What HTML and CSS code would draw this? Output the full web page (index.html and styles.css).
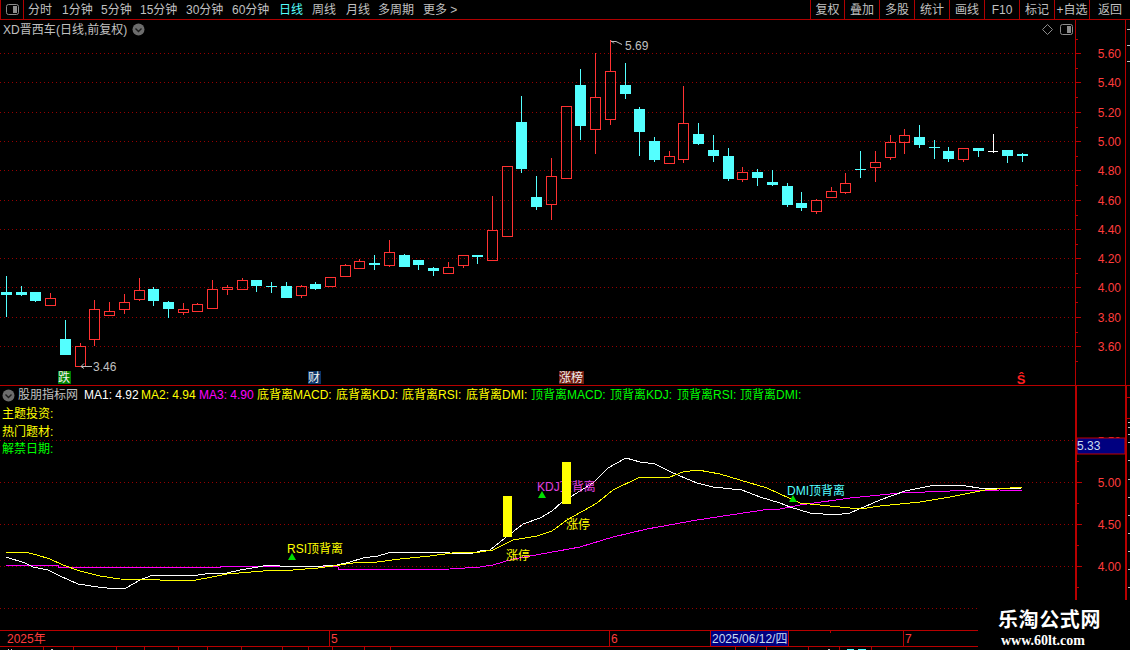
FILE: index.html
```html
<!DOCTYPE html>
<html lang="zh-CN">
<head>
<meta charset="utf-8">
<title>XD晋西车</title>
<link rel="stylesheet" href="styles.css">
</head>
<body>
<div class="app">
  <header class="toolbar">
    <button class="panel-btn" aria-label="panel"><svg class="glyph" width="13" height="11" viewBox="0 0 13 11"><rect x="0.5" y="0.5" width="12" height="10" rx="2" class="box"/><rect x="7" y="2" width="4" height="7" class="box-fill"/></svg></button>
    <nav class="periods">
      <span>分时</span><span>1分钟</span><span>5分钟</span><span>15分钟</span><span>30分钟</span><span>60分钟</span><span class="active">日线</span><span>周线</span><span>月线</span><span>多周期</span><span>更多 &gt;</span>
    </nav>
    <nav class="actions">
      <span>复权</span><span>叠加</span><span>多股</span><span>统计</span><span>画线</span><span>F10</span><span>标记</span><span>+自选</span><span>返回</span>
    </nav>
  </header>

  <section class="pane kline">
    <div class="pane-title">
      <span>XD晋西车 (日线,前复权)</span>
      <svg class="glyph" width="13" height="13" viewBox="0 0 13 13"><circle cx="6.5" cy="6.5" r="6" class="disc"/><path d="M3.5 5.5l3 3 3-3" class="chev"/></svg>
    </div>
    <svg class="chart" width="1130" height="366" viewBox="0 20 1130 366">
      <path class="grid" d="M0 53.5H1075M0 82.5H1075M0 112.5H1075M0 141.5H1075M0 170.5H1075M0 200.5H1075M0 229.5H1075M0 258.5H1075M0 287.5H1075M0 317.5H1075M0 346.5H1075"/>
      <path class="axis" d="M1075.5 20V386M1125.5 20V386M0 385.5H1130"/>
      <path class="axis" d="M1075 53.5h6M1075 82.5h6M1075 112.5h6M1075 141.5h6M1075 170.5h6M1075 200.5h6M1075 229.5h6M1075 258.5h6M1075 287.5h6M1075 317.5h6M1075 346.5h6M1075 68.5h3M1075 97.5h3M1075 127.5h3M1075 156.5h3M1075 185.5h3M1075 215.5h3M1075 244.5h3M1075 273.5h3M1075 302.5h3M1075 332.5h3M1075 361.5h3M1075 39.5h3"/>
      <path class="stub" d="M1127 29.5h3M1127 45.5h3M1127 61.5h3"/>
      <g class="price">
        <text x="1121" y="58">5.60</text><text x="1121" y="87">5.40</text><text x="1121" y="117">5.20</text><text x="1121" y="146">5.00</text><text x="1121" y="175">4.80</text><text x="1121" y="205">4.60</text><text x="1121" y="234">4.40</text><text x="1121" y="263">4.20</text><text x="1121" y="292">4.00</text><text x="1121" y="322">3.80</text><text x="1121" y="351">3.60</text>
      </g>
      <path class="c-red" d="M50.5 293V298M45.5 298.5h10v7h-10zM80.5 343V346M75.5 346.5h10v20h-10zM94.5 300V309M94.5 340V346M89.5 309.5h10v30h-10zM109.5 302V311M104.5 311.5h10v4h-10zM124.5 294V302M124.5 310V314M119.5 302.5h10v7h-10zM139.5 278V290M139.5 300V301M134.5 290.5h10v9h-10zM183.5 303V309M183.5 313V315M178.5 309.5h10v3h-10zM197.5 303V304M192.5 304.5h10v7h-10zM212.5 280V289M207.5 289.5h10v19h-10zM227.5 285V287M227.5 290V295M222.5 287.5h10v2h-10zM242.5 278V280M237.5 280.5h10v9h-10zM301.5 285V286M301.5 296V298M296.5 286.5h10v9h-10zM325.5 277.5h10v9h-10zM345.5 264V265M340.5 265.5h10v11h-10zM359.5 259V261M354.5 261.5h10v7h-10zM389.5 240V252M389.5 266V267M384.5 252.5h10v13h-10zM448.5 262V267M443.5 267.5h10v6h-10zM463.5 266V268M458.5 255.5h10v10h-10zM492.5 196V230M487.5 230.5h10v30h-10zM502.5 166.5h10v70h-10zM551.5 158V176M551.5 205V220M546.5 176.5h10v28h-10zM561.5 106.5h10v72h-10zM595.5 53V97M595.5 130V154M590.5 97.5h10v32h-10zM610.5 40V71M610.5 120V125M605.5 71.5h10v48h-10zM669.5 151V156M664.5 156.5h10v7h-10zM683.5 86V123M683.5 160V163M678.5 123.5h10v36h-10zM742.5 167V172M742.5 180V182M737.5 172.5h10v7h-10zM816.5 199V200M816.5 212V214M811.5 200.5h10v11h-10zM831.5 187V191M826.5 191.5h10v6h-10zM845.5 173V183M845.5 193V194M840.5 183.5h10v9h-10zM875.5 151V162M875.5 168V182M870.5 162.5h10v5h-10zM890.5 135V142M890.5 158V160M885.5 142.5h10v15h-10zM904.5 129V135M904.5 143V154M899.5 135.5h10v7h-10zM963.5 160V162M958.5 148.5h10v11h-10z"/>
      <path class="c-cyan-w" d="M6.5 276V317M21.5 286V296M35.5 301V302M65.5 320V339M153.5 287V306M168.5 301V318M256.5 286V292M271.5 282V293M286.5 282V286M315.5 282V290M374.5 255V270M404.5 254V255M418.5 265V270M433.5 267V276M477.5 257V264M521.5 96V173M536.5 176V210M580.5 69V140M625.5 63V99M639.5 107V156M654.5 137V162M698.5 123V145M713.5 135V162M728.5 148V181M757.5 169V186M772.5 170V186M787.5 183V207M801.5 192V211M860.5 151V178M919.5 125V148M934.5 140V159M948.5 147V162M978.5 151V157M1007.5 156V163M1022.5 153V162"/>
      <path class="c-cyan" d="M1 292h11v3h-11zM16 292h11v3h-11zM30 292h11v9h-11zM60 339h11v16h-11zM148 289h11v12h-11zM163 302h11v7h-11zM251 280h11v6h-11zM266 286h11v1h-11zM281 286h11v12h-11zM310 284h11v5h-11zM369 263h11v2h-11zM399 255h11v12h-11zM413 260h11v5h-11zM428 268h11v3h-11zM472 255h11v2h-11zM516 122h11v47h-11zM531 197h11v10h-11zM575 85h11v41h-11zM620 85h11v9h-11zM634 109h11v23h-11zM649 141h11v19h-11zM693 134h11v10h-11zM708 150h11v6h-11zM723 156h11v23h-11zM752 172h11v6h-11zM767 182h11v3h-11zM782 186h11v19h-11zM796 203h11v5h-11zM855 169h11v1h-11zM914 137h11v8h-11zM929 147h11v1h-11zM943 151h11v8h-11zM973 148h11v3h-11zM1002 150h11v6h-11zM1017 154h11v2h-11z"/>
      <path class="c-white" d="M993.5 134V153M988 151.5h10"/>
      <path class="marker" d="M92 366.5H81M84 363.5l-3 3 3 2M622 44.5l-6-3H611M611 40.5l3 3"/>
      <text class="note" x="93" y="371">3.46</text>
      <text class="note" x="625" y="50">5.69</text>
      <rect x="58" y="371" width="13" height="13" class="tag-green"/>
      <text class="tag" x="58" y="382">跌</text>
      <rect x="308" y="371" width="13" height="13" class="tag-blue"/>
      <text class="tag" x="308" y="382">财</text>
      <rect x="559" y="371" width="25" height="13" class="tag-maroon"/>
      <text class="tag" x="559" y="382">涨榜</text>
      <text class="sig" x="1021" y="384">Ŝ</text>
      <path class="diamond" d="M1047.5 24.5l5 5-5 5-5-5z"/>
      <rect x="1060.5" y="24.5" width="12" height="10" rx="2" class="box"/><rect x="1067" y="26" width="4" height="7" class="box-fill"/>
    </svg>
  </section>

  <section class="pane indicator">
    <div class="ind-legend">
      <svg class="glyph" width="13" height="13" viewBox="0 0 13 13"><circle cx="6.5" cy="6.5" r="6" class="disc"/><path d="M3.5 5.5l3 3 3-3" class="chev"/></svg>
      <span class="gray">股朋指标网</span>
      <span class="white">MA1: 4.92</span>
      <span class="yellow">MA2: 4.94</span>
      <span class="magenta">MA3: 4.90</span>
      <span class="yellow">底背离MACD:</span>
      <span class="yellow">底背离KDJ:</span>
      <span class="yellow">底背离RSI:</span>
      <span class="yellow">底背离DMI:</span>
      <span class="green">顶背离MACD:</span>
      <span class="green">顶背离KDJ:</span>
      <span class="green">顶背离RSI:</span>
      <span class="green">顶背离DMI:</span>
    </div>
    <ul class="ind-notes">
      <li class="yellow">主题投资:</li>
      <li class="yellow">热门题材:</li>
      <li class="green">解禁日期:</li>
    </ul>
    <svg class="chart" width="1130" height="244" viewBox="0 386 1130 244">
      <path class="grid" d="M0 440.5H1075M0 482.5H1075M0 524.5H1075M0 566.5H1075M0 608.5H1075"/>
      <path class="axis-thick" d="M1076 386V630M1126 386V630"/>
      <path class="axis" d="M1075 482.5h7M1075 524.5h7M1075 566.5h7M1075 461.5h4M1075 503.5h4M1075 545.5h4M1075 587.5h4M1075 608.5h7M1127 397.5h3M1127 418.5h3"/>
      <path class="stub" d="M1128 422.5h2M1128 427.5h2M1128 434.5h2M1128 442.5h2M1128 460.5h2M1128 479.5h2M1128 497.5h2M1128 515.5h2M1128 533.5h2M1128 551.5h2M1128 569.5h2M1128 587.5h2"/>
      <g class="price">
        <text x="1121" y="446">5.50</text><text x="1121" y="487">5.00</text><text x="1121" y="529">4.50</text><text x="1121" y="571">4.00</text>
      </g>
      <rect x="1077" y="438" width="48" height="16" class="cursor-box"/>
      <text class="cursor-text" x="1077" y="450">5.33</text>
      <polyline class="ma3" points="6,565 58,565 58,567 220,567 220,566 307,566 338,567 338,569 397,569 400,570 450,569 480,567 493,565 513,559 547,553 580,547 613,537 647,529 697,520 730,515 770,509 780,509 800,505 850,498 900,493 950,491 1000,490 1022,491"/>
      <polyline class="ma1" points="6,557 25,563 33,567 48,570 60,576 78,584 98,587 107,588 126,588 140,580 153,575 175,575 192,576 205,574 227,573 240,570 258,567 268,565 280,566 323,566 337,565 350,562 363,558 378,556 388,553 400,552 430,552 470,554 480,551 490,550 505,538 523,524 540,518 552,511 562,502 580,491 593,483 608,468 626,458 640,462 655,464 673,473 697,483 713,487 742,490 760,497 780,503 790,507 810,513 835,515 850,513 880,500 905,491 935,485 960,485 985,489 1022,488"/>
      <polyline class="ma2" points="6,552 25,552 37,555 50,559 63,565 80,571 100,576 120,579 160,580 190,581 207,578 227,574 263,571 293,570 318,568 333,566 353,563 377,562 400,559 430,556 460,552 480,552 493,550 513,540 537,536 552,531 567,520 597,503 613,490 638,478 670,477 683,472 698,470 720,474 740,480 767,488 780,494 800,503 830,506 860,509 880,506 920,502 950,497 985,490 1022,487"/>
      <text class="lbl lbl-magenta" x="537" y="491">KDJ顶背离</text>
      <rect x="503" y="496" width="9" height="41" class="limit-bar"/>
      <rect x="562" y="462" width="9" height="42" class="limit-bar"/>
      <text class="lbl lbl-yellow" x="287" y="553">RSI顶背离</text>
      <text class="lbl lbl-yellow" x="506" y="560">涨停</text>
      <text class="lbl lbl-yellow" x="566" y="529">涨停</text>
      <text class="lbl lbl-cyan" x="787" y="495">DMI顶背离</text>
      <path class="tri" d="M292 553l4 7h-8zM542 491l4 7h-8zM793 495l4 7h-8z"/>
    </svg>
  </section>

  <footer class="time-axis">
    <svg class="chart" width="1130" height="20" viewBox="0 630 1130 20">
      <path class="axis" d="M0 630.5H1130M0 646.5H1130M329.5 630V646M609.5 630V646M903.5 630V646M830.5 631V633"/>
      <path class="axis" d="M43.5 647V650M73.5 647V650M116.5 647V650M144.5 647V650M178.5 647V650M207.5 647V650M241.5 647V650M282.5 647V650M308.5 647V650M332.5 647V650M364.5 647V650M390.5 647V650M735.5 647V650M766.5 647V650M808.5 647V650M839.5 647V650M871.5 647V650"/>
      <path class="stub" d="M8 649.5h1M11 649.5h1M51 649.5h2M828 649.5h2"/>
      <path class="c-cyan-w" d="M847 649.5h7M858 649.5h8"/>
      <g class="time">
        <text x="7" y="643">2025年</text><text x="331" y="643">5</text><text x="611" y="643">6</text><text x="905" y="643">7</text>
      </g>
      <rect x="710.5" y="630.5" width="78" height="16" class="cursor-date"/>
      <text class="cursor-text" x="712" y="643">2025/06/12/四</text>
    </svg>
  </footer>

  <aside class="logo">
    <div class="logo-name">乐淘公式网</div>
    <div class="logo-url">www.60lt.com</div>
  </aside>
</div>
</body>
</html>
```

FILE: styles.css
```css
* { box-sizing: border-box; }
html, body { margin: 0; padding: 0; background: #000; }
body { font: 12px/1 "Liberation Sans", "Noto Sans CJK SC", sans-serif; color: #c0c0c0; }
.app { position: relative; width: 1130px; height: 650px; overflow: hidden; background: #000; display: flex; flex-direction: column; }

/* toolbar */
.toolbar { height: 20px; display: flex; align-items: stretch; border-bottom: 1px solid #b00000; border-left: 1px solid #b00000; flex: none; }
.panel-btn { width: 23px; padding: 0; background: none; border: 0; border-right: 1px solid #b00000; display: flex; align-items: center; justify-content: center; }
.periods { display: grid; grid-template-columns: 34px 39px 39px 46px 46px 47px 33px 34px 32px 45px auto; padding-left: 4px; align-items: center; white-space: nowrap; }
.periods .active { color: #54ffff; }
.actions { margin-left: auto; display: flex; }
.actions span { width: 35px; border-left: 1px solid #b00000; display: flex; align-items: center; justify-content: center; white-space: nowrap; }
.actions span:first-child { width: 34px; }
.actions span:last-child { width: 41px; }

/* panes */
.pane { position: relative; flex: none; }
.kline { height: 366px; }
.indicator { height: 244px; }
.time-axis { height: 20px; flex: none; }
.chart { display: block; }
.pane-title { position: absolute; left: 3px; top: 3px; display: flex; align-items: center; gap: 5px; height: 13px; z-index: 1; white-space: nowrap; word-spacing: -3px; }
.glyph { display: block; flex: none; }
.box { fill: none; stroke: #8c8c8c; }
.box-fill { fill: #8c8c8c; }
.disc { fill: #6c6c6c; }
.chev { fill: none; stroke: #1c1c1c; stroke-width: 1.4; }

.grid { fill: none; stroke: #960000; stroke-dasharray: 1 3; shape-rendering: crispEdges; }
.axis { fill: none; stroke: #b80000; shape-rendering: crispEdges; }
.axis-thick { fill: none; stroke: #b80000; stroke-width: 2; shape-rendering: crispEdges; }
.stub { fill: none; stroke: #c0c0c0; shape-rendering: crispEdges; }
.price text { font-size: 12px; fill: #ff3c3c; text-anchor: end; }
.time text { font-size: 12px; fill: #ff3c3c; }

.c-red { fill: none; stroke: #ff3232; shape-rendering: crispEdges; }
.c-cyan-w { fill: none; stroke: #54ffff; shape-rendering: crispEdges; }
.c-cyan { fill: #54ffff; shape-rendering: crispEdges; }
.c-white { fill: none; stroke: #fff; shape-rendering: crispEdges; }
.marker { fill: none; stroke: #c0c0c0; }
.note { font-size: 12px; fill: #c0c0c0; }
.tag { font-size: 12px; fill: #f0f0f0; }
.tag-green { fill: #008000; }
.tag-blue { fill: #0c3468; }
.tag-maroon { fill: #701c10; }
.sig { font-size: 13px; font-weight: 700; fill: #ff2020; text-anchor: middle; }
.diamond { fill: none; stroke: #8c8c8c; }

/* indicator */
.ind-legend { position: absolute; left: 2px; top: 2px; display: grid; grid-template-columns: 16px 66px 57px 58px 58px 79px 66px 64px 65px 79px 67px 63px auto; align-items: center; height: 14px; white-space: nowrap; z-index: 1; }
.ind-notes { position: absolute; left: 2px; top: 22px; margin: 0; padding: 0; list-style: none; display: flex; flex-direction: column; gap: 5.5px; z-index: 1; }
.gray { color: #c0c0c0; }
.white { color: #fff; }
.yellow { color: #ffff00; }
.magenta { color: #ff00ff; }
.green { color: #00ff00; }
.ma1, .ma2, .ma3 { fill: none; shape-rendering: crispEdges; }
.ma1 { stroke: #fff; }
.ma2 { stroke: #ffff00; }
.ma3 { stroke: #ff00ff; }
.limit-bar { fill: #ffff00; }
.tri { fill: #00e000; }
.lbl { font-size: 12px; }
.lbl-magenta { fill: #e040e0; }
.lbl-yellow { fill: #ffff00; }
.lbl-cyan { fill: #54ffff; }
.cursor-box { fill: #000080; stroke: #c00000; }
.cursor-date { fill: #000080; stroke: #c00000; }
.cursor-text { font-size: 12px; fill: #c8dcf0; }

/* watermark */
.logo { position: absolute; left: 978px; top: 600px; width: 152px; height: 50px; background: #000; color: #fff; padding: 9px 0 0 20px; font-family: "Noto Sans CJK SC", sans-serif; }
.logo-name { font-size: 20px; line-height: 20px; font-weight: 700; letter-spacing: 0.6px; }
.logo-url { font: 700 14px/16px "Liberation Serif", serif; margin: 4px 0 0 3px; }
```
